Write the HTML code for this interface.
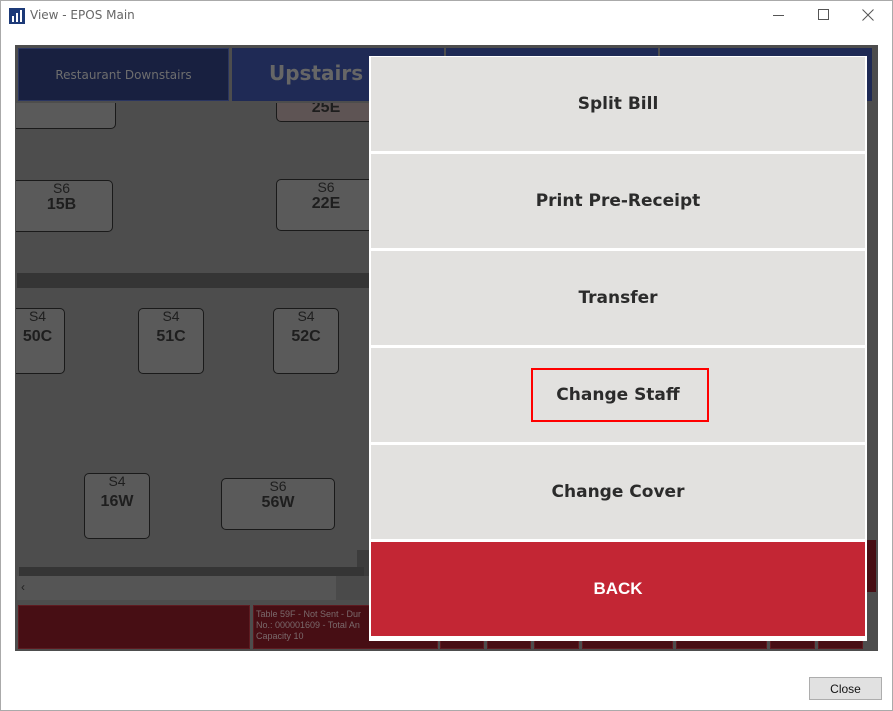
<!DOCTYPE html>
<html><head><meta charset="utf-8"><style>
*{margin:0;padding:0;box-sizing:border-box}
body{width:893px;height:711px;background:#fff;position:relative;overflow:hidden;font-family:"Liberation Sans",sans-serif}
.a{position:absolute}
.t{position:absolute;background:#5a5a5a;border:1px solid #1a1a1a;border-radius:5px;text-align:center;color:#1e1e1e;font-size:14px;line-height:15px}
.t b{display:block;font-size:16px;line-height:18px}
.btn{position:absolute;left:371px;width:494px;background:#e2e1df;display:flex;align-items:center;justify-content:center;font-family:"DejaVu Sans",sans-serif;font-weight:bold;font-size:17px;color:#2b2b2b}
.dk{position:absolute;background:#470e14;border:1px solid #5e1a20}
</style></head><body>
<div class="a" style="left:0;top:0;width:893px;height:711px;border:1px solid #aaa"></div>
<div class="a" style="left:9px;top:8px;width:16px;height:16px;background:#1d3a78"></div>
<div class="a" style="left:12px;top:16px;width:2px;height:6px;background:#fff"></div>
<div class="a" style="left:16px;top:13px;width:2px;height:9px;background:#fff"></div>
<div class="a" style="left:20px;top:10px;width:2px;height:12px;background:#fff"></div>
<div class="a" style="left:30px;top:8px;font-size:12px;color:#666;font-family:'DejaVu Sans',sans-serif">View - EPOS Main</div>
<div class="a" style="left:773px;top:15px;width:11px;height:1px;background:#555"></div>
<div class="a" style="left:818px;top:9px;width:11px;height:11px;border:1px solid #555"></div>
<svg class="a" style="left:862px;top:9px" width="12" height="12"><path d="M0.5 0.5L11.5 11.5M11.5 0.5L0.5 11.5" stroke="#555" stroke-width="1"/></svg>

<div class="a" style="left:15px;top:45px;width:863px;height:606px;background:#4d4d4d"></div>
<div class="a" style="left:18px;top:48px;width:211px;height:53px;background:#182040;border:1px solid #2a3560;color:#6e6e6e;font-family:'DejaVu Sans',sans-serif;font-size:12px;display:flex;align-items:center;justify-content:center">Restaurant Downstairs</div>
<div class="a" style="left:232px;top:48px;width:212px;height:53px;background:#1f2a55;color:#666;font-family:'DejaVu Sans',sans-serif;font-weight:bold;font-size:20px;padding:13px 0 0 37px">Upstairs</div>
<div class="a" style="left:446px;top:48px;width:212px;height:53px;background:#1f2a55"></div>
<div class="a" style="left:660px;top:48px;width:212px;height:53px;background:#1f2a55"></div>

<div class="a" style="left:16px;top:103px;width:356px;height:498px;overflow:hidden">
<div style="position:absolute;left:-16px;top:-103px;width:400px;height:700px">
<div class="t" style="left:10px;top:90px;width:106px;height:39px"></div>
<div class="t" style="left:276px;top:90px;width:100px;height:32px;background:#5e5454;padding-top:8px"><b>25E</b></div>
<div class="t" style="left:10px;top:180px;width:103px;height:52px">S6<b>15B</b></div>
<div class="t" style="left:276px;top:179px;width:100px;height:52px">S6<b>22E</b></div>
<div class="a" style="left:17px;top:273px;width:360px;height:15px;background:#353535"></div>
<div class="t" style="left:10px;top:308px;width:55px;height:66px">S4<b style="margin-top:4px">50C</b></div>
<div class="t" style="left:138px;top:308px;width:66px;height:66px">S4<b style="margin-top:4px">51C</b></div>
<div class="t" style="left:273px;top:308px;width:66px;height:66px">S4<b style="margin-top:4px">52C</b></div>
<div class="t" style="left:84px;top:473px;width:66px;height:66px">S4<b style="margin-top:4px">16W</b></div>
<div class="t" style="left:221px;top:478px;width:114px;height:52px">S6<b>56W</b></div>
<div class="a" style="left:357px;top:550px;width:15px;height:30px;background:#3c3c3c"></div>
<div class="a" style="left:19px;top:567px;width:345px;height:9px;background:#353535"></div>
<div class="a" style="left:17px;top:576px;width:355px;height:24px;background:#555"></div>
<div class="a" style="left:336px;top:576px;width:36px;height:24px;background:#4a4a4a"></div>
<div class="a" style="left:21px;top:580px;color:#222;font-size:12px">‹</div>
</div></div>
<div class="a" style="left:866px;top:540px;width:10px;height:52px;background:#470e14"></div>

<div class="dk" style="left:18px;top:605px;width:232px;height:44px"></div>
<div class="dk" style="left:253px;top:605px;width:185px;height:44px;color:#7a6a6c;font-size:9px;line-height:11px;padding:3px 2px;overflow:hidden;white-space:nowrap">Table 59F - Not Sent - Dur<br>No.: 000001609 - Total An<br>Capacity 10</div>
<div class="dk" style="left:440px;top:636px;width:44px;height:13px"></div>
<div class="dk" style="left:487px;top:636px;width:44px;height:13px"></div>
<div class="dk" style="left:534px;top:636px;width:45px;height:13px"></div>
<div class="dk" style="left:582px;top:636px;width:91px;height:13px"></div>
<div class="dk" style="left:676px;top:636px;width:91px;height:13px"></div>
<div class="dk" style="left:770px;top:636px;width:45px;height:13px"></div>
<div class="dk" style="left:818px;top:636px;width:45px;height:13px"></div>

<div class="a" style="left:369px;top:56px;width:498px;height:585px;background:#fff"></div>
<div class="btn" style="top:57px;height:94px">Split Bill</div>
<div class="btn" style="top:154px;height:94px">Print Pre-Receipt</div>
<div class="btn" style="top:251px;height:94px">Transfer</div>
<div class="btn" style="top:348px;height:94px">Change Staff</div>
<div class="a" style="left:531px;top:368px;width:178px;height:54px;border:2px solid #f00"></div>
<div class="btn" style="top:445px;height:94px">Change Cover</div>
<div class="btn" style="top:542px;height:94px;background:#c32634;color:#fff;font-family:'Liberation Sans Narrow','Liberation Sans',sans-serif;font-size:17px">BACK</div>

<div class="a" style="left:809px;top:677px;width:73px;height:23px;background:#e1e1e1;border:1px solid #adadad;font-size:12px;display:flex;align-items:center;justify-content:center;color:#111">Close</div>
</body></html>
